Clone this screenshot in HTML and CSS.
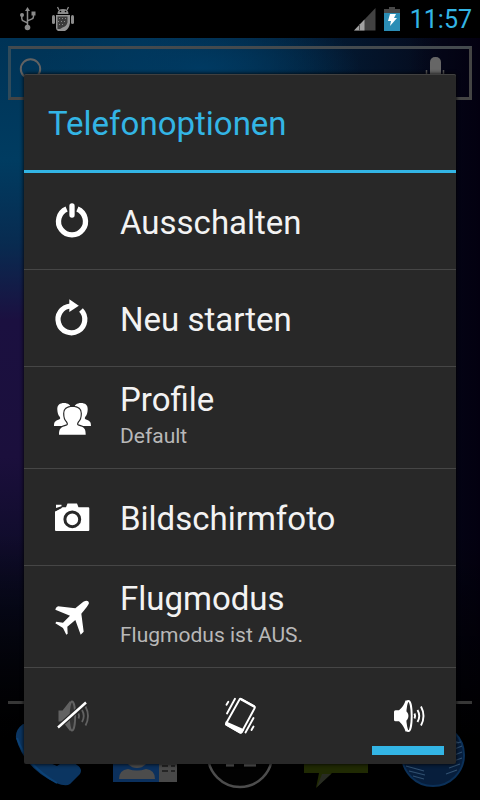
FILE: index.html
```html
<!DOCTYPE html>
<html lang="de">
<head>
<meta charset="utf-8">
<meta name="viewport" content="width=device-width, initial-scale=1">
<title>Telefonoptionen</title>
<link rel="stylesheet" href="styles.css">
</head>
<body>
<header class="status">
  <div class="status-left">
    <svg width="16" height="24" viewBox="0 0 16 24" fill="none" stroke="#8b8b8b" stroke-width="1.500" aria-hidden="true">
      <path d="M7.500 3v17M1.800 7v4.500q0 2 2 2.600l3.500 1.800M13.500 6v3.500q0 2-2 2.600l-4 1.800"/>
      <g fill="#8b8b8b" stroke="none"><path d="M7.500 0l2.500 4H5z"/><circle cx="7.500" cy="20.500" r="2.800"/><circle cx="2" cy="8" r="2"/><path d="M11.500 4.500h4v4h-4z"/></g>
    </svg>
    <svg width="24" height="26" viewBox="0 0 24 26" aria-hidden="true">
      <path d="M6.500 8q0-5 5.500-5t5.500 5z" fill="#8b8b8b"/>
      <path d="M8 4L6.500 1M16 4l1.500-3" stroke="#8b8b8b" stroke-width="1.300"/>
      <circle cx="9.500" cy="5.500" r=".8"/><circle cx="14.500" cy="5.500" r=".8"/>
      <rect x="1" y="9" width="3" height="9" rx="1.500" fill="#8b8b8b"/><rect x="20" y="9" width="3" height="9" rx="1.500" fill="#8b8b8b"/>
      <path d="M5 9h14v8q-1 6-5 8H7q-2-1-2-3z" fill="#929292"/>
      <path d="M6.500 10.500h10v6q-1 4-5 5L9 23H6.500z" fill="#3b3b3b"/>
      <path d="M8 12.500h8M7 15.500h9M8 18.500h5" stroke="#888" stroke-dasharray="1 2"/>
    </svg>
  </div>
  <div class="status-right">
    <svg width="22" height="24" viewBox="0 0 22 24" aria-hidden="true"><path d="M0 23.500L21.500 1v22.500z" fill="#424242"/><path d="M0 23.500L10.500 12.500v11z" fill="#a2a2a2"/><path d="M5.500 17v7" stroke="#555"/></svg>
    <svg width="16" height="24" viewBox="0 0 16 24" aria-hidden="true"><path d="M0 2h5V0h6v2h5v5H0z" fill="#484848"/><path d="M0 6h16v18H0z" fill="#2b8db5"/><path d="M6 7h6l-2 4h3l-7 8 1-5H4z" fill="#fff"/></svg>
    <time class="clock">11:57</time>
  </div>
</header>

<main class="home">
  <div class="search">
    <svg width="24" height="28" viewBox="0 0 24 28" fill="none" stroke="#626262" stroke-width="2" aria-hidden="true"><circle cx="11.500" cy="12" r="9.700"/></svg>
    <svg width="20" height="28" viewBox="0 0 20 28" aria-hidden="true"><rect x="5" y="0" width="11" height="24" rx="5" fill="#666"/><path d="M1.500 13v8M18.500 13v8" stroke="#555" stroke-width="1.500"/></svg>
  </div>
  <div class="dock">
    <svg class="app" viewBox="0 0 72 72" aria-hidden="true"><path d="M10 2Q2 8 3 16q8 30 40 45 10 4 14 1l10-10q3-5-3-9-8-7-14-3l-6 4Q28 38 22 24l4-8Q20 2 10 2z" fill="#0b3561"/><path d="M4 16q10 28 40 45" stroke="#0c4276" stroke-width="2" fill="none"/></svg>
    <svg class="app" viewBox="0 0 72 72" aria-hidden="true"><path d="M4 10h64v50H4z" fill="#0b305d"/><path d="M50 10h18v50H50z" fill="#484848"/><circle cx="28" cy="34" r="12" fill="#4c4c4c"/><path d="M10 57q0-9 9-10 9 3 18 0 9 1 9 10z" fill="#4c4c4c"/><path d="M53 44h6m3 0h4M53 49h6m3 0h4" stroke="#252525" stroke-width="2"/></svg>
    <svg class="app" viewBox="0 0 72 72" aria-hidden="true"><circle cx="36" cy="33" r="32" fill="#020202" stroke="#4d4d4d" stroke-width="2.500"/><path d="M22 43h8m10 0h12" stroke="#555" stroke-width="3"/></svg>
    <svg class="app" viewBox="0 0 72 72" aria-hidden="true"><path d="M4 4h64v47H32L16 66l3-15H4z" fill="#202a03"/><path d="M22 52h9L17 65z" fill="#282b22"/></svg>
    <svg class="app" viewBox="0 0 72 72" aria-hidden="true"><circle cx="38" cy="33" r="31" fill="#071e3c" stroke="#0b3058" stroke-width="2"/><g stroke="#315070" stroke-width="1.200" fill="none"><path d="M11 44l18 5M14 49l16 4M18 54l11 3M55 17l9 4M56 22l10-2M57 28l10-4M57 34l10-4M56 40l11-4M54 46l11-4M51 52l11-4"/></g></svg>
  </div>
</main>

<div class="overlay">
  <section class="dialog" role="dialog" aria-labelledby="title">
    <h1 class="title" id="title">Telefonoptionen</h1>
    <ul class="options">
      <li><button class="option" type="button">
        <svg class="icon" viewBox="0 0 48 48" fill="none" stroke="#fff" stroke-width="5.300" aria-hidden="true"><path d="M18.600 12A13.500 13.500 0 1 0 29.400 12"/><path d="M24 9v9" stroke-linecap="round"/></svg>
        <span class="label">Ausschalten</span>
      </button></li>
      <li><button class="option" type="button">
        <svg class="icon" viewBox="0 0 48 48" aria-hidden="true"><path d="M33 16A13.400 13.400 0 1 1 22.500 12" fill="none" stroke="#fff" stroke-width="5.200"/><path d="M21.300 5.300L30.800 11.700 21.300 18z" fill="#fff"/></svg>
        <span class="label">Neu starten</span>
      </button></li>
      <li><button class="option tall" type="button">
        <svg class="icon" viewBox="0 0 48 48" fill="#fff" aria-hidden="true">
          <path d="M6 32c0-4 1-5 5-6.500 1.500-.7 1.500-1.500.5-3-1.500-1.500-2-4-2.200-7C9 11 12 9 16 9s7 2 7 6v17z"/>
          <path d="M43 32c0-4-1-5-5-6.500-1.500-.7-1.500-1.500-.5-3 1.500-1.500 2-4 2.200-7C40 11 37 9 33 9s-7 2-7 6v17z"/>
          <path d="M11 40.700c0-6 1.500-7.500 8-9.200 1.500-.8 1-2.500 0-4-2-2-2.700-4-2.700-8C16.300 15.200 19 13 24.500 13s8.200 2.200 8.200 6.500c0 4-.7 6-2.700 8-1 1.500-1.500 3.200 0 4 6.500 1.700 7.700 3.200 7.700 9.200z" stroke="#282828" stroke-width="2.400" paint-order="stroke"/>
        </svg>
        <span class="text"><span class="label">Profile</span><span class="note">Default</span></span>
      </button></li>
      <li><button class="option" type="button">
        <svg class="icon" viewBox="0 0 48 48" aria-hidden="true"><path d="M8 14.500L14 14.300H18L19.500 10.500h9.500L30.500 14.300H40.300q1 0 1 1V37q0 1-1 1H8q-1 0-1-1V18.500L14.500 14.300z" fill="#fff"/><path d="M7 17.500l6.500-3.200" stroke="#282828" stroke-width="1.500"/><path d="M8 11.700h5.500v1.500L8 15z" fill="#fff"/><circle cx="24.300" cy="26.300" r="7.400" fill="none" stroke="#282828" stroke-width="3"/></svg>
        <span class="label">Bildschirmfoto</span>
      </button></li>
      <li><button class="option tall" type="button">
        <svg class="icon" viewBox="0 0 48 48" aria-hidden="true"><g transform="translate(-8 -12) scale(.33333)" fill="#fff"><path d="M130 62Q145 55 147 66 147 71 124 98L131 152 122 161 106 117 82 137 83 158 79 161 69 141 46 127 49 122 69 125 90 104 46 86Q46 80 54 76L106 82z"/></g></svg>
        <span class="text"><span class="label">Flugmodus</span><span class="note">Flugmodus ist AUS.</span></span>
      </button></li>
    </ul>
    <div class="sound" role="group" aria-label="Klingelmodus">
      <button class="mode" type="button" aria-label="Lautlos">
        <svg class="icon" viewBox="0 0 48 48" aria-hidden="true">
          <g fill="none" stroke="#626262" stroke-width="1.800"><path d="M10.500 18.500h4L22 9v30l-7.500-9.500h-4z" fill="#626262" stroke="none"/><ellipse cx="24" cy="24" rx="3.200" ry="14.500" fill="#333"/><path d="M30.500 21.500q1.200 2.500 0 5M34 18q3.500 6 0 12M37.500 14.500q5 9.500 0 19"/></g>
          <path d="M10 35.500L38 10.500" stroke="#282828" stroke-width="5"/><path d="M10 35.500L38 10.500" stroke="#fff" stroke-width="2.400"/>
        </svg>
      </button>
      <button class="mode" type="button" aria-label="Vibration">
        <svg class="icon" viewBox="0 0 48 48" fill="none" stroke="#fff" stroke-width="1.900" stroke-linecap="round" aria-hidden="true">
          <path d="M24.800 6.800L38 14q1.300.8.600 2.200L26 39.500q-.8 1.500-2.200.8L11 33q-1.300-.8-.5-2.200L23.500 7.500q.5-1 1.300-.7z"/>
          <path d="M10.500 30.500L27 38l-1.500 2.300q-.8.700-1.700 0L10 32.500z" fill="#fff"/><path d="M25.500 7.500l12.500 7" stroke-width="2.500"/>
          <path d="M19 6.800L11 21.500M12.300 9.800l-1.800 3M29.500 40.500l8-14.500M37.500 34.500L35.500 38"/>
        </svg>
      </button>
      <button class="mode selected" type="button" aria-label="Ton" aria-pressed="true">
        <svg class="icon" viewBox="0 0 48 48" aria-hidden="true"><g fill="none" stroke="#fff" stroke-width="1.900"><path d="M11.500 18.300H15Q20 14 21.500 8.500h3v31h-3Q20 34 15 29.300h-3.500q-1.500 0-1.500-1.500v-8q0-1.500 1.500-1.500z" fill="#fff" stroke="none"/><ellipse cx="24.500" cy="24" rx="3.200" ry="15" fill="#282828"/><path d="M22 20q3 4 0 8" fill="#fff"/><path d="M30.500 21.500q1.200 2.500 0 5M33.500 18q3.500 6 0 12M37 14.500q5 9.500 0 19"/></g></svg>
      </button>
    </div>
  </section>
</div>
</body>
</html>
```
FILE: styles.css
```css
* {
  box-sizing: border-box;
}

body {
  margin: 0;
  min-height: 100vh;
  display: flex;
  flex-direction: column;
  position: relative;
  background: #000;
  color: #f3f3f3;
  font-family: Roboto, "Noto Sans", sans-serif;
}

.status {
  height: 38px;
  padding: 0 8px 0 20px;
  display: flex;
  align-items: center;
  justify-content: space-between;
  background: #000;
}

.status-left,
.status-right {
  display: flex;
  align-items: center;
}

.status-left {
  gap: 15px;
}

.status-right {
  gap: 8px;
}

.clock {
  padding: 2px 0 0 2px;
  color: #33b5e5;
  font-size: 25px;
  line-height: 32px;
}

.home {
  flex: 1;
  padding: 8px 8px 6px;
  display: flex;
  flex-direction: column;
  justify-content: space-between;
  background:
    linear-gradient(transparent 65%, #000 92%),
    linear-gradient(90deg, transparent 85%, #030010 100%),
    radial-gradient(ellipse 160px 60px at 200px 30px, #003a62, transparent),
    linear-gradient(90deg, transparent 30%, #050a1c 92%),
    linear-gradient(#003356, #003c61 16%, #082b50 27%, #1b1040 37%, #1b0f3c 55%, #080a20 75%, #000);
}

.search {
  height: 54px;
  padding: 8px 24px 8px 8px;
  border: 3px solid #484848;
  border-color: #444a4e #444 #444 #304b5b;
  display: flex;
  justify-content: space-between;
}

.dock {
  padding: 18px 5px 0;
  border-top: 3px solid #373737;
  display: flex;
  justify-content: space-between;
}

.app {
  width: 72px;
  height: 72px;
}

.overlay {
  position: absolute;
  inset: 38px 0 0;
  padding: 0 24px;
  display: flex;
  align-items: center;
}

.dialog {
  flex: 1;
  background: #282828;
  border-radius: 2px;
  box-shadow: 0 0 4px #000, inset 0 1px #404040;
}

.title {
  margin: 0;
  padding: 30px 24px 26px;
  border-bottom: 3px solid #33b5e5;
  color: #33b5e5;
  font-size: 33px;
  font-weight: 400;
  line-height: 40px;
}

.options {
  margin: 0;
  padding: 0;
  list-style: none;
}

.options li {
  border-bottom: 1px solid #464646;
}

.option,
.mode {
  border: 0;
  background: none;
  color: inherit;
  font: inherit;
}

.option {
  width: 100%;
  min-height: 96px;
  padding: 0 24px;
  display: flex;
  align-items: center;
  gap: 24px;
  text-align: left;
}

.tall {
  min-height: 101px;
}

.icon {
  width: 48px;
  height: 48px;
  flex: none;
}

.text {
  padding-bottom: 4px;
  display: flex;
  flex-direction: column;
}

.label {
  font-size: 33px;
  line-height: 40px;
}

.option > .label {
  padding-top: 4px;
}

.note {
  color: #b8b8b8;
  font-size: 21px;
  line-height: 32px;
}

.sound {
  padding: 0 12px 9px;
  display: flex;
  justify-content: space-between;
}

.mode {
  width: 72px;
  height: 87px;
  padding: 18px 0 0;
  border-bottom: 9px solid transparent;
  display: flex;
  justify-content: center;
  align-items: center;
}

.selected {
  border-bottom-color: #33b5e5;
}
```
